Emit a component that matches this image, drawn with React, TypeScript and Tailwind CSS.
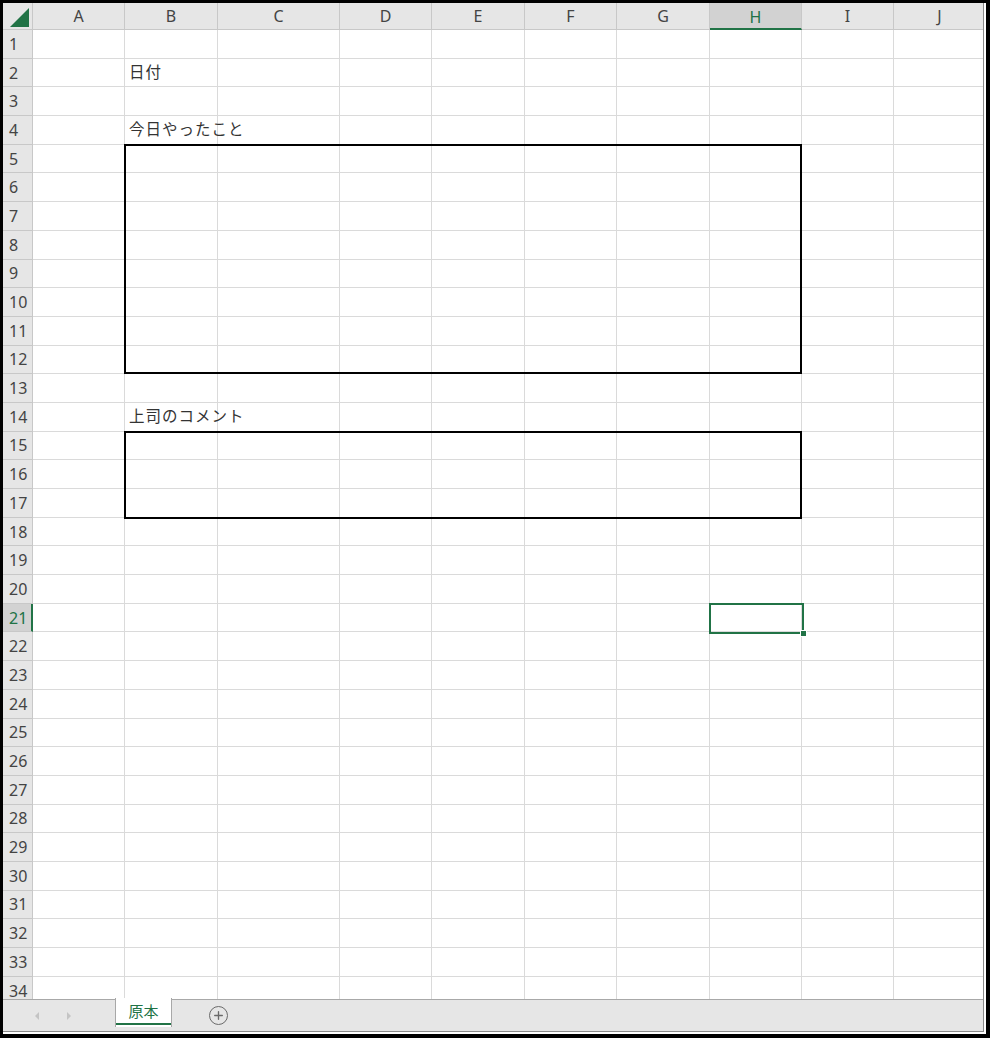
import { Plus } from "lucide-react";

const columns = [
  { name: "A", width: 92 },
  { name: "B", width: 93 },
  { name: "C", width: 122 },
  { name: "D", width: 92 },
  { name: "E", width: 93 },
  { name: "F", width: 92 },
  { name: "G", width: 93 },
  { name: "H", width: 92 },
  { name: "I", width: 92 },
  { name: "J", width: 92 },
];

const labels: Record<number, string> = {
  2: "日付",
  4: "今日やったこと",
  14: "上司のコメント",
};

const rows = Array.from({ length: 34 }, (_, i) => i + 1);

const App = () => {
  return (
    <div
      className="h-[1038px] w-[990px] overflow-hidden border-[3px] border-r-4 border-b-4 border-black bg-white text-[#333]"
      style={{ fontFamily: '"Noto Sans", "Noto Sans CJK JP", sans-serif' }}
    >
      <div className="flex h-full w-full flex-col pr-[2px] pb-[2px]">
        <div className="flex flex-1 flex-col overflow-hidden border-r border-b border-[#8a8a8a]">
          {/* column header */}
          <div className="flex h-[27px] shrink-0">
            <div className="relative w-[30px] shrink-0 border-r border-b border-[#c8c8c8] bg-[#e6e6e6]">
              <svg className="absolute top-[5px] left-[7px]" width="20" height="19" viewBox="0 0 20 19">
                <polygon points="0,19 19,19 19,0" fill="#217346" />
              </svg>
            </div>
            {columns.map((col) => {
              const active = col.name === "H";
              return (
                <div
                  key={col.name}
                  style={{ width: col.width }}
                  className={
                    active
                      ? "flex shrink-0 items-center justify-center border-r border-b-2 border-r-[#c8c8c8] border-b-[#217346] bg-[#d2d2d2] pt-[2px] text-[16px] text-[#217346]"
                      : "flex shrink-0 items-center justify-center border-r border-b border-[#c8c8c8] bg-[#e6e6e6] text-[16px] text-[#444]"
                  }
                >
                  {col.name}
                </div>
              );
            })}
          </div>

          {/* body */}
          <div className="flex min-h-0 flex-1">
            <div className="flex w-[30px] shrink-0 flex-col">
              {rows.map((r) => {
                const active = r === 21;
                return (
                  <div
                    key={r}
                    className={
                      active
                        ? "flex h-[28.7px] shrink-0 items-center border-r-2 border-b border-r-[#217346] border-b-[#c8c8c8] bg-[#d2d2d2] pl-[6px] text-[16px] text-[#217346]"
                        : "flex h-[28.7px] shrink-0 items-center border-r border-b border-[#c8c8c8] bg-[#e6e6e6] pl-[6px] text-[16px] text-[#444]"
                    }
                  >
                    {r}
                  </div>
                );
              })}
            </div>

            <div className="relative min-w-0 flex-1">
              {rows.map((r) => (
                <div key={r} className="flex h-[28.7px]">
                  {columns.map((col) => (
                    <div
                      key={col.name}
                      style={{ width: col.width }}
                      className="flex shrink-0 items-center border-r border-b border-[#dadada] pl-[4px] text-[15.5px] tracking-[1px] whitespace-nowrap"
                    >
                      {col.name === "B" && labels[r]}
                    </div>
                  ))}
                </div>
              ))}

              {/* bordered input areas */}
              <div className="absolute top-[114px] left-[91px] h-[230px] w-[678px] border-2 border-black" />
              <div className="absolute top-[401px] left-[91px] h-[88px] w-[678px] border-2 border-black" />

              {/* active cell */}
              <div className="absolute top-[573px] left-[676px] h-[31px] w-[95px] border-2 border-[#217346]">
                <div className="absolute -right-[5px] -bottom-[5px] h-[7px] w-[7px] border border-white bg-[#217346]" />
              </div>
            </div>
          </div>

          {/* sheet tabs */}
          <div className="relative flex h-[32px] shrink-0 items-center border-t border-[#a8a8a8] bg-[#e6e6e6]">
            <div className="flex w-[112px] items-center gap-[24px] pl-[30px] text-[#c4c4c4]">
              <svg width="8" height="10" viewBox="0 0 8 10">
                <polygon points="6,1 2,5 6,9" fill="#c4c4c4" />
              </svg>
              <svg width="8" height="10" viewBox="0 0 8 10">
                <polygon points="2,1 6,5 2,9" fill="#c4c4c4" />
              </svg>
            </div>
            <div className="-mt-[2px] flex h-[29px] w-[57px] items-start justify-center self-start border-x border-[#a8a8a8] bg-white">
              <div className="mt-[2px] flex h-[25px] w-[55px] items-center justify-center border-b-2 border-[#217346] text-[15px] text-[#217346]">
                原本
              </div>
            </div>
            <div className="ml-[37px] flex h-[19px] w-[19px] items-center justify-center rounded-full border-[1.5px] border-[#6a6a6a]">
              <Plus className="size-[13px] text-[#6a6a6a]" strokeWidth={2.5} />
            </div>
          </div>
        </div>
      </div>
    </div>
  );
};

export default App;
